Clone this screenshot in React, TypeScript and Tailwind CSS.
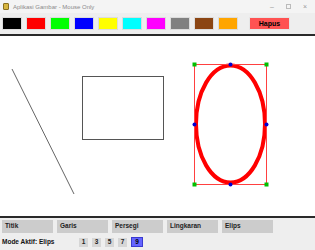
import React from "react";

const colors = [
  "#000000",
  "#ff0000",
  "#00ff00",
  "#0000ff",
  "#ffff00",
  "#00ffff",
  "#ff00ff",
  "#808080",
  "#8b4513",
  "#ffa500",
];

const modes = ["Titik", "Garis", "Persegi", "Lingkaran", "Elips"];
const sizes = [1, 3, 5, 7, 9];

const App: React.FC = () => {
  return (
    <div
      className="w-[315px] h-[250px] flex flex-col bg-[#eeeeee] overflow-hidden"
      style={{ fontFamily: '"Liberation Sans", Arial, sans-serif' }}
    >
      {/* title bar */}
      <div className="h-[13px] flex items-center bg-[#f4f4f4] px-[3px]">
        <div className="w-[6px] h-[7px] rounded-[1px] bg-[#d8b640] border border-[#8a7020]" />
        <span className="ml-[4px] text-[6px] text-[#8a8a8a] leading-none">
          Aplikasi Gambar - Mouse Only
        </span>
        <div className="ml-auto flex items-center gap-[12px] pr-[5px] text-[7px] text-[#9a9a9a] leading-none">
          <span>–</span>
          <span className="w-[5px] h-[5px] border border-[#bbbbbb]" />
          <span>×</span>
        </div>
      </div>

      {/* toolbar */}
      <div className="h-[21px] flex items-center px-[2px] gap-[4px]">
        {colors.map((c) => (
          <div
            key={c}
            className="w-[20px] h-[13px] border border-[#dcdcdc]"
            style={{ backgroundColor: c }}
          />
        ))}
        <button className="ml-[7px] w-[41px] h-[13px] bg-[#ff5252] border border-[#e6e6e6] text-[7px] font-bold text-black leading-none">
          Hapus
        </button>
      </div>

      {/* canvas */}
      <div className="h-[184px] bg-white border-y-2 border-[#2a2a2a] relative">
        <svg width="315" height="180" className="block">
          <line x1="12" y1="33" x2="74" y2="158" stroke="#666" strokeWidth="1" />
          <rect x="82.5" y="40.5" width="81" height="63" fill="none" stroke="#555" strokeWidth="1" />
          <ellipse cx="230.5" cy="88" rx="34.5" ry="58.5" fill="none" stroke="#ff0000" strokeWidth="4" />
          <rect x="194.5" y="28.5" width="72" height="120" fill="none" stroke="#ff4040" strokeWidth="1" />
          {[
            [194.5, 28.5],
            [266.5, 28.5],
            [194.5, 148.5],
            [266.5, 148.5],
          ].map(([x, y]) => (
            <rect key={`${x}-${y}`} x={x - 2} y={y - 2} width="4" height="4" fill="#00c000" />
          ))}
          {[
            [230.5, 28.5],
            [230.5, 148.5],
            [194.5, 88.5],
            [266.5, 88.5],
          ].map(([x, y]) => (
            <circle key={`${x}-${y}`} cx={x} cy={y} r="2" fill="#0000d0" />
          ))}
        </svg>
      </div>

      {/* bottom panel */}
      <div className="flex flex-col px-[2px] pt-[2px]">
        <div className="flex gap-[4px]">
          {modes.map((m) => (
            <div
              key={m}
              className="w-[51px] h-[13px] bg-[#cccccc] flex items-center pl-[3px] text-[6.5px] font-bold text-[#222] leading-none"
            >
              {m}
            </div>
          ))}
        </div>
        <div className="flex items-center mt-[4px] h-[10px]">
          <span className="text-[6.5px] font-bold text-[#111] leading-none w-[77px]">
            Mode Aktif: Elips
          </span>
          <div className="flex items-center gap-[4px]">
            {sizes.map((s) =>
              s === 9 ? (
                <div
                  key={s}
                  className="w-[12px] h-[10px] bg-[#6464ff] border border-[#3a3ad0] flex items-center justify-center text-[6.5px] font-bold text-black leading-none"
                >
                  {s}
                </div>
              ) : (
                <div
                  key={s}
                  className="w-[9px] h-[9px] bg-[#d6d6d6] flex items-center justify-center text-[6.5px] font-bold text-[#222] leading-none"
                >
                  {s}
                </div>
              )
            )}
          </div>
        </div>
      </div>
    </div>
  );
};

export default App;
